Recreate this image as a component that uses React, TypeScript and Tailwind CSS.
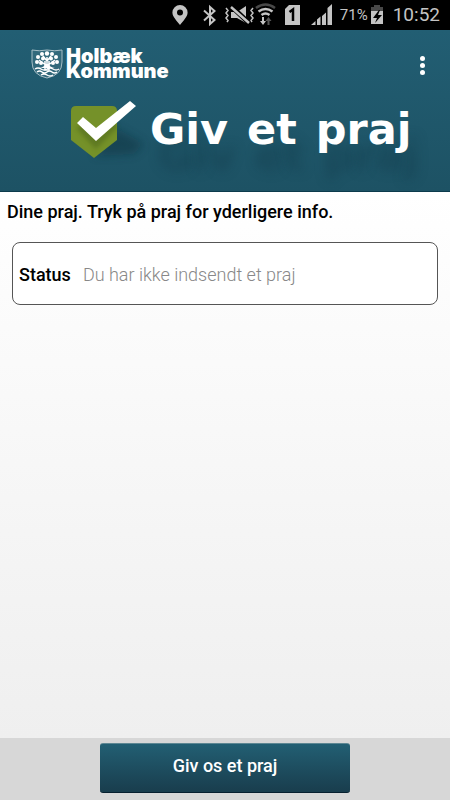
import React from "react";

function StatusBar() {
  return (
    <div className="flex h-[30px] items-center justify-end bg-black pr-[10px] text-[#c4c4c4]">
      <svg width="174" height="30" viewBox="0 0 174 30" className="shrink-0" fill="currentColor" aria-hidden="true">
        {/* location pin */}
        <path fillRule="evenodd" d="M19 5a7.6 7.6 0 0 1 7.6 7.6C26.6 17 22 21 19 25c-3-4-7.6-8-7.6-12.4A7.6 7.6 0 0 1 19 5Zm0 4.600a3 3 0 1 0 0 6 3 3 0 0 0 0-6Z" />
        {/* bluetooth */}
        <path d="m43 10.500 10.500 9.500L49 24V7l4.500 4L43 20.500" fill="none" stroke="currentColor" strokeWidth="2" />
        {/* muted with vibration */}
        <path d="m65 8 2 2.500-2 2.500 2 2.500-2 2.500 2 2.500-1 1.500M92 8l-2 2.500 2 2.500-2 2.500 2 2.500-2 2.500 1 1.500" fill="none" stroke="currentColor" strokeWidth="1.500" />
        <path d="M70 12h6l9-6v17l-9-5h-6Z" />
        <path d="m70 6 18 17" stroke="black" strokeWidth="5" />
        <path d="m70 7 18 16" stroke="currentColor" strokeWidth="2.500" />
        {/* wifi */}
        <g fill="none" strokeWidth="2.500">
          <path d="M95 8q9.500-7 19 0" stroke="#484848" />
          <path d="M97.500 11.500q7-5 14 0M100.500 15q4-3 8 0" stroke="currentColor" />
        </g>
        <path d="M101 17h2v4h2l-3 4-3-4h2Z" />
        <path d="M106.500 25v-4h-2l3-4 3 4h-2v4Z" fill="#555" />
        {/* sim card */}
        <path d="M128 5h11v20h-15V9Z" />
        <path d="M128.500 12 132 9.500V21" fill="none" stroke="black" strokeWidth="2.500" />
        {/* signal */}
        <path d="M150 25 154.500 21v4ZM156 25v-5.500l3.500-3V25ZM161 25v-9l4-3.500V25ZM166.500 25V8l4.500-4v21Z" />
      </svg>
      <span className="ml-[5px] text-[15px] leading-[30px]">71%</span>
      <svg width="14" height="22" viewBox="0 0 14 22" className="mr-[2px] ml-[2px] shrink-0" aria-hidden="true">
        <path d="M1 7V3h3V1h6v2h3v4Z" fill="#484848" />
        <path d="M1 7h12v13H1Z" fill="#c4c4c4" />
        <path d="m9 6-6 8h4l-2 5 7-8H8l2-5Z" fill="black" />
      </svg>
      <span className="ml-[7px] text-[19px] leading-[30px]">10:52</span>
    </div>
  );
}

function Crest() {
  return (
    <svg width="32" height="30" viewBox="0 0 32 30" fill="none" stroke="white" aria-hidden="true">
      <path d="M1 1q7 1.500 15 0 8 1.500 15 0v12q0 13-15 16Q1 26 1 13Z" strokeWidth="1" opacity=".6" fill="#ffffff22" />
      <path d="M16 19V8M16 17l-8-6M16 17l8-6M16 12l-4-5M16 12l4-5M14 12v9h4v-9" strokeWidth="1.500" />
      <g fill="white" stroke="none">
        <circle cx="16" cy="4.500" r="2.200" />
        <circle cx="11" cy="5" r="2" />
        <circle cx="21" cy="5" r="2" />
        <circle cx="7" cy="8" r="2" />
        <circle cx="25" cy="8" r="2" />
        <circle cx="12" cy="9.500" r="2" />
        <circle cx="20" cy="9.500" r="2" />
        <circle cx="6" cy="13" r="2" />
        <circle cx="26" cy="13" r="2" />
        <circle cx="10" cy="14" r="2" />
        <circle cx="22" cy="14" r="2" />
        <path d="M8 19q6-1 6-4h4q0 3 6 4Z" />
      </g>
      <path d="M4 20q3-2 6 0t6 0 6 0 6 0M6 23q2.500-2 5 0t5 0 5 0 5 0M10 26q3-2 6 0t6 0" strokeWidth="1.500" />
    </svg>
  );
}

function Header() {
  return (
    <header className="flex h-[162px] flex-col overflow-hidden border-b border-[#0c3b4c] bg-linear-to-b from-[#225e73] to-[#1d5264] text-white">
      <div className="flex h-[48px] items-start justify-between pt-[19px] pr-[22px] pl-[31px]">
        <div className="flex gap-[3px]">
          <Crest />
          <p className="font-['Inter',sans-serif] text-[20px] leading-[15px] font-black">
            Holbæk
            <br />
            Kommune
          </p>
        </div>
        <button type="button" aria-label="Menu" className="mt-[7px] flex w-3 flex-col items-center gap-[2px]">
          <span className="size-[5px] rounded-full bg-white" />
          <span className="size-[5px] rounded-full bg-white" />
          <span className="size-[5px] rounded-full bg-white" />
        </button>
      </div>
      <div className="flex items-start pt-[20px] pl-[70px]">
        <svg width="68" height="68" viewBox="0 0 68 68" className="shrink-0 overflow-visible" aria-hidden="true">
          <defs>
            <filter id="soft" x="-50%" y="-50%" width="200%" height="200%">
              <feGaussianBlur stdDeviation="5" />
            </filter>
            <filter id="close" x="-50%" y="-50%" width="200%" height="200%">
              <feGaussianBlur stdDeviation="2" />
            </filter>
          </defs>
          <path d="M24 58 46 30 74 46 64 56Z" fill="#0d2d3a" opacity=".45" filter="url(#soft)" />
          <path d="M6 8h36q5 0 5 5v29L24 60 1 42V13q0-5 5-5Z" fill="#759129" />
          <path d="m9 28 17 18 20-20" fill="none" stroke="#3d5712" strokeWidth="7" opacity=".4" filter="url(#close)" />
          <path d="m7 25 6-6 13 11 34-27 6 5-40 35Z" fill="white" />
        </svg>
        <h1 className="mt-[7px] ml-[12px] flex gap-[19px] font-['DejaVu_Sans',sans-serif] text-[43px] leading-[48px] font-bold [text-shadow:8px_26px_12px_#12384766]">
          <span>Giv</span> <span>et</span> <span>praj</span>
        </h1>
      </div>
    </header>
  );
}

export default function App() {
  return (
    <div className="flex min-h-screen flex-col font-['Roboto',sans-serif] text-black">
      <StatusBar />
      <Header />
      <main className="flex-1 bg-linear-to-b from-white to-[#efefef]">
        <h2 className="px-[7px] pt-[8px] text-[18px] leading-[24px] font-medium">
          Dine praj. Tryk på praj for yderligere info.
        </h2>
        <dl className="mx-[12px] mt-[18px] flex h-[63px] items-center rounded-[8px] border border-[#555] bg-white px-[6px] pt-[2px]">
          <dt className="text-[18px] font-medium">Status</dt>
          <dd className="ml-[12px] text-[18px] font-light text-[#888]">Du har ikke indsendt et praj</dd>
        </dl>
      </main>
      <footer className="flex h-[62px] justify-center bg-[#d7d7d7] pt-[5px]">
        <button
          type="button"
          className="h-[50px] w-[250px] rounded-[3px] border-t border-b border-t-[#5d8793] border-b-[#07202f] bg-linear-to-b from-[#225f73] to-[#193d4d] pb-[5px] text-[18px] font-medium text-white"
        >
          Giv os et praj
        </button>
      </footer>
    </div>
  );
}
